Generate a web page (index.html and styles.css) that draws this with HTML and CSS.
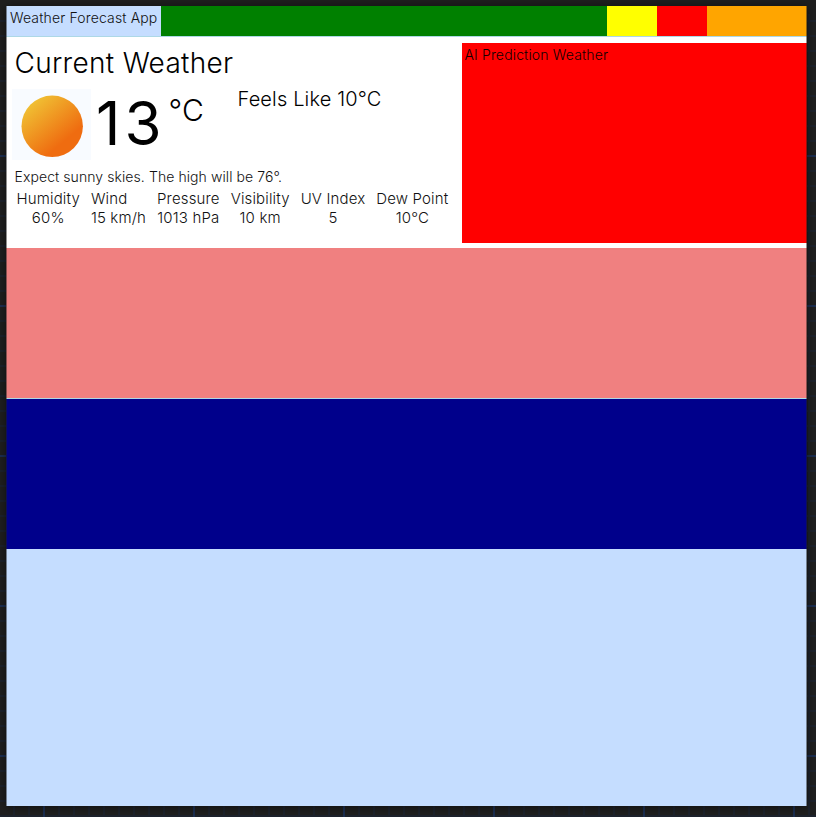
FILE: index.html
```
<!DOCTYPE html>
<html lang="en">
<head>
<meta charset="utf-8">
<title>Weather Forecast App</title>
<link rel="stylesheet" href="styles.css">
</head>
<body>
<div class="window">
  <header class="bar">
    <div class="title"><span>Weather Forecast App</span></div>
    <div class="green"></div>
    <div class="yellow"></div>
    <div class="red"></div>
    <div class="orange"></div>
  </header>
  <main class="weather">
    <section class="current">
      <h1><span>Current Weather</span></h1>
      <div class="now">
        <svg class="icon" viewBox="0 0 79 71">
          <defs><linearGradient id="sun" x1="0.15" y1="0.1" x2="0.75" y2="0.82">
            <stop offset="0" stop-color="#f0c234"/><stop offset="0.9" stop-color="#ef6c10"/>
          </linearGradient></defs>
          <circle cx="40.2" cy="37.3" r="30.7" fill="url(#sun)"/>
        </svg>
        <span class="temp">13</span>
        <span class="unit">°C</span>
        <span class="feels">Feels Like 10°C</span>
      </div>
      <p><span>Expect sunny skies. The high will be 76°.</span></p>
      <dl>
        <div><dt>Humidity</dt><dd>60%</dd></div>
        <div class="wind"><dt>Wind</dt><dd>15 km/h</dd></div>
        <div><dt>Pressure</dt><dd>1013 hPa</dd></div>
        <div><dt>Visibility</dt><dd>10 km</dd></div>
        <div><dt>UV Index</dt><dd>5</dd></div>
        <div><dt>Dew Point</dt><dd>10°C</dd></div>
      </dl>
    </section>
    <section class="prediction">AI Prediction Weather</section>
  </main>
  <div class="coral"></div>
  <div class="navy"></div>
</div>
</body>
</html>
```
FILE: styles.css
```
* { box-sizing: border-box; margin: 0; padding: 0; }
body {
  height: 817px;
  padding: 6px 0 0 6px;
  overflow: hidden;
  font: 300 14px/17px Inter, sans-serif;
  letter-spacing: .15px;
  color: #000;
  background:
    linear-gradient(#1f1f1f, #1f1f1f) 0 0 / 100% 14px no-repeat,
    repeating-linear-gradient(90deg, #1b2e50 0 2px, transparent 2px 150px) 43px 0 / 150px 100%,
    repeating-linear-gradient(#1b2e50 0 2px, transparent 2px 150px) 0 5px / 100% 150px,
    linear-gradient(90deg, #1d222c 2px, transparent 2px) 13px 0 / 15px 100%,
    linear-gradient(#1d222c 2px, transparent 2px) 0 5px / 100% 15px,
    #1f1f1f;
}
.window {
  position: relative;
  width: 801px;
  height: 800px;
  background: #c5ddff;
  box-shadow: 0 1px 8px rgba(0, 0, 0, .5);
}
.window::after {
  content: "";
  position: absolute;
  inset: 0;
  border: solid rgba(31, 31, 31, .5);
  border-width: 0 1px;
}
.bar { display: flex; height: 31px; border-bottom: 1px solid #add8e6; background: #c5ddff; }
.title { width: 154.5px; padding: 3px 0 0 4px; white-space: nowrap; color: #111; }
.green { flex: 1; background: #008000; }
.yellow { width: 50px; background: #ff0; }
.red { width: 50px; background: #f00; }
.orange { width: 100px; background: #ffa500; }
.weather { display: flex; height: 211px; padding: 6px 0 5px; background: #fff; }
.current { width: 455.5px; padding-left: 6px; }
h1 { height: 46px; padding: 2px 0 0 2.5px; font-size: 28px; line-height: 37px; font-weight: 300; letter-spacing: .3px; }
.now { display: flex; height: 76px; }
.icon { width: 79px; height: 71px; background: #f8fbff; }
.temp { width: 72.5px; margin-left: 5px; font-size: 60px; line-height: 68px; font-weight: 400; letter-spacing: 4px; }
.unit { width: 69px; font-size: 30px; line-height: 42px; }
.feels { font-size: 20px; line-height: 20px; white-space: nowrap; }
p { padding-left: 2.5px; height: 24px; line-height: 24px; font-size: 14px; letter-spacing: .08px; color: #111; }
dl { display: flex; gap: 11px; padding-left: 4.5px; font-size: 15px; line-height: 19px; color: #111; }
dl div { text-align: center; white-space: nowrap; }
.wind dt { text-align: left; }
.prediction { flex: 1; padding: 3px; color: #100; background: #f00; }
.coral { height: 151px; background: #f08080; border-bottom: 1px solid #add8e6; }
.navy { height: 150px; background: #00008b; }
```
